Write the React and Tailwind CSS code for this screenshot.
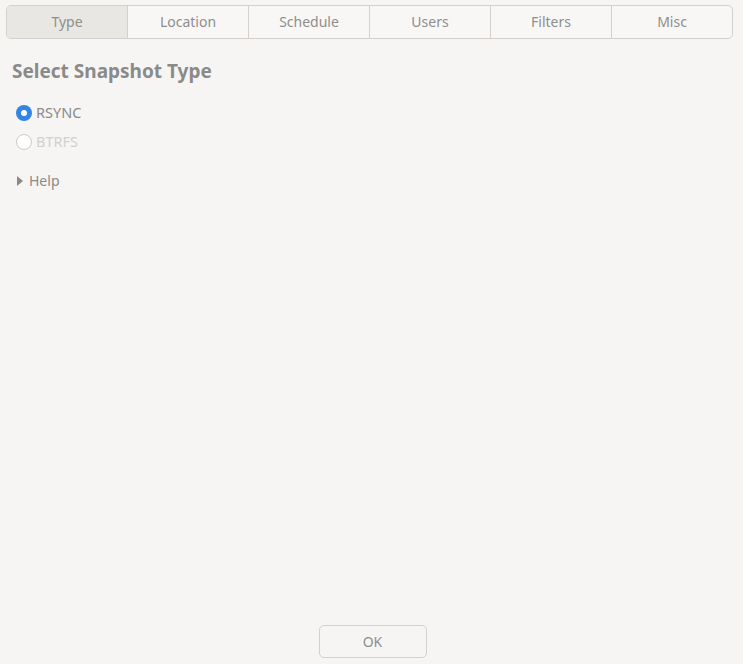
import { useState } from "react";

const tabs = ["Type", "Location", "Schedule", "Users", "Filters", "Misc"];

const Radio = ({ checked, disabled, label, onClick }) => (
  <button
    type="button"
    onClick={onClick}
    disabled={disabled}
    className="flex items-center gap-[4px] h-[20px]"
  >
    {checked ? (
      <span className="w-[16px] h-[16px] rounded-full bg-[#3584e4] flex items-center justify-center">
        <span className="w-[6px] h-[6px] rounded-full bg-white" />
      </span>
    ) : (
      <span className="w-[16px] h-[16px] rounded-full border border-[#cfcac5] bg-white" />
    )}
    <span className={disabled ? "text-[#d3cfcb]" : "text-[#8a8a89]"}>{label}</span>
  </button>
);

const App = () => {
  const [active, setActive] = useState(0);
  const [type, setType] = useState("rsync");

  return (
    <div
      className="h-[664px] w-[743px] bg-[#f6f5f4] flex flex-col text-[14px]"
      style={{ fontFamily: '"Noto Sans", "Open Sans", sans-serif' }}
    >
      <div className="pl-[6px] pr-[10px] pt-[5px]">
        <div className="flex h-[34px] border border-[#d5d0cc] rounded-[5px] overflow-hidden bg-[#f8f7f6]">
          {tabs.map((t, i) => (
            <button
              key={t}
              onClick={() => setActive(i)}
              className={
                "flex-1 flex items-center justify-center pb-[2px] text-[#8e8e8d] " +
                (i > 0 ? "border-l border-[#d5d0cc] " : "") +
                (i === active ? "bg-[#e8e7e3]" : "")
              }
            >
              {t}
            </button>
          ))}
        </div>
      </div>

      <div className="flex-1 px-[12px] pt-[20px]">
        <h1 className="text-[19px] font-bold text-[#8a8a89] leading-[25px]">Select Snapshot Type</h1>

        <div className="mt-[19px] pl-[4px] flex flex-col gap-[9px] text-[14.5px]">
          <Radio checked={type === "rsync"} label="RSYNC" onClick={() => setType("rsync")} />
          <Radio checked={false} disabled label="BTRFS" />
        </div>

        <div className="mt-[18px] pl-[5px] flex items-center gap-[6px] text-[#8a8a89]">
          <svg width="6" height="10" viewBox="0 0 6 10">
            <path d="M0 0 L6 5 L0 10 Z" fill="#8a8a89" />
          </svg>
          <span>Help</span>
        </div>
      </div>

      <div className="flex justify-center pb-[6px] pl-[2px]">
        <button className="w-[108px] h-[33px] border border-[#d5d0cc] rounded-[5px] bg-[#f6f5f4] text-[#8e8e8d]">
          OK
        </button>
      </div>
    </div>
  );
};

export default App;
